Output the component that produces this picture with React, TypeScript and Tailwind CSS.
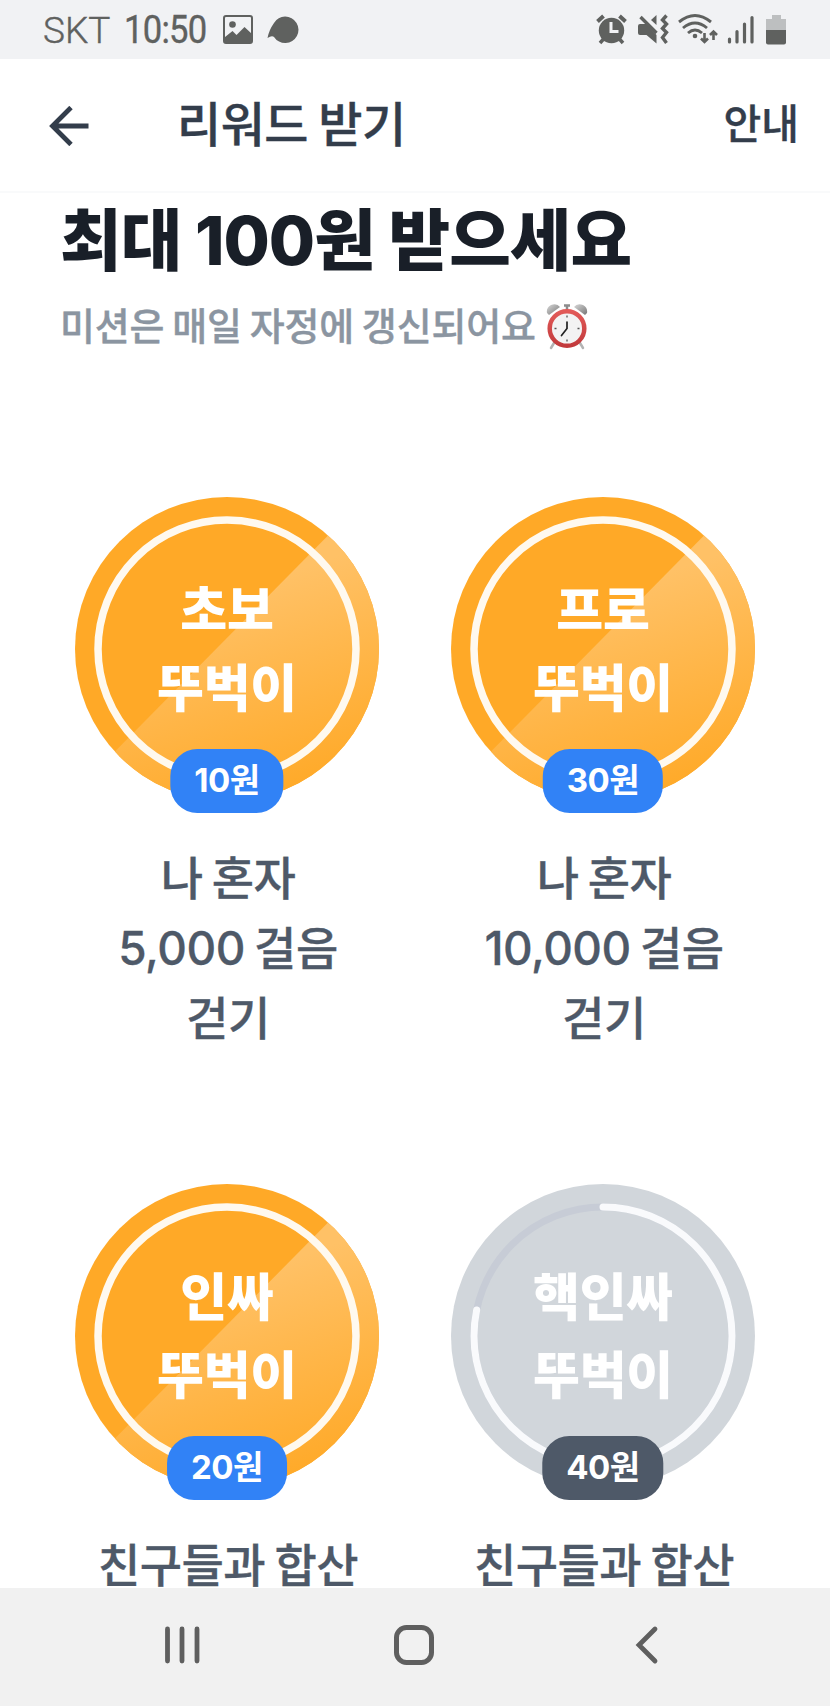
import React from "react";

interface Mission {
  title: string[];
  reward: string;
  description: string[];
  done: boolean;
}

const missions: Mission[] = [
  { title: ["초보", "뚜벅이"], reward: "10원", description: ["나 혼자", "5,000 걸음", "걷기"], done: true },
  { title: ["프로", "뚜벅이"], reward: "30원", description: ["나 혼자", "10,000 걸음", "걷기"], done: true },
  { title: ["인싸", "뚜벅이"], reward: "20원", description: ["친구들과 합산"], done: true },
  { title: ["핵인싸", "뚜벅이"], reward: "40원", description: ["친구들과 합산"], done: false },
];

const RING_RADIUS = 129;
const RING_LENGTH = 2 * Math.PI * RING_RADIUS;

const StatusIcons = () => (
  <svg className="block h-[59px] w-[210px]" viewBox="590 0 210 59" fill="none" stroke="#5f615f" strokeWidth="2.6">
    {/* alarm */}
    <circle cx="611.5" cy="30.5" r="12.7" fill="#5f615f" stroke="none" />
    <path d="M597.5 21.5l6-5.5M625.5 21.5l-6-5.5" strokeWidth="4" />
    <path d="M600 43l4-4.5M623 43l-4-4.5" strokeWidth="3.5" />
    <path d="M611 22v9.5h7.5" stroke="#f1f2f4" strokeWidth="3" />
    {/* muted, vibrating */}
    <path d="M638 26q0-2 2-2h6l10.5 11v8.5L646.5 35H640q-2 0-2-2z" fill="#5f615f" stroke="none" />
    <path d="M656.5 15v10l-5.5-5z" fill="#5f615f" stroke="none" />
    <path d="M640.5 17l16 16" strokeWidth="3.4" />
    <path d="M666.5 15.5l-4 4.5 4 4-4 4.5 4 4-4 5 4 5.5" strokeWidth="3.4" />
    {/* wifi */}
    <path d="M679 22q16-13 32 0M683 28q12-10 24 0M688 33q7-6 14 0" strokeWidth="2.9" />
    <circle cx="695" cy="36" r="2.3" fill="#5f615f" stroke="none" />
    <path d="M704.5 33v8M701 38.5l3.5 3.5 3.5-3.5M713.5 40v-8M710 35l3.5-3.5 3.5 3.5" strokeWidth="2.6" />
    {/* signal */}
    <path d="M729.5 39v3M737 31.5V42M744.5 24v18M752 17.5V42" strokeWidth="3.2" strokeLinecap="round" />
    {/* battery */}
    <path d="M772 15h9v4h5v11h-20V19h6z" fill="#bdbfc0" stroke="none" />
    <path d="M766 30h20v12.5q0 2-2 2h-16q-2 0-2-2z" fill="#5f615f" stroke="none" />
  </svg>
);

const AlarmClock = () => (
  <svg className="mt-[2px] ml-[10px] block h-[46px] w-[42px]" viewBox="0 0 42 46">
    <defs>
      <linearGradient id="bell" x1="0" y1="0" x2="1" y2="1">
        <stop offset="0" stopColor="#d8d8d8" />
        <stop offset="1" stopColor="#757575" />
      </linearGradient>
      <linearGradient id="rim" x1="0" y1="0" x2="0" y2="1">
        <stop offset="0" stopColor="#e25a58" />
        <stop offset="1" stopColor="#c23a3c" />
      </linearGradient>
    </defs>
    <path d="M8 39l-3 5M34 39l3 5" stroke="#b3b3b3" strokeWidth="2.5" strokeLinecap="round" />
    <path d="M1 9Q0 4 5 1q6-2 9 2L3 11z" fill="url(#bell)" />
    <path d="M41 9q1-5-4-8-6-2-9 2l11 8z" fill="url(#bell)" />
    <path d="M18 1.5h6M21 1v6" stroke="#8c8c8c" strokeWidth="2.5" />
    <circle cx="21" cy="24.5" r="17.3" fill="#f3f3f3" stroke="url(#rim)" strokeWidth="4.5" />
    <path d="M21 11.5v2M21 35.5v2M8.5 24.5h2M31.5 24.5h2" stroke="#555" strokeWidth="1.3" />
    <path d="M21 18v6.5l-5.5 7" fill="none" stroke="#222" strokeWidth="1.7" strokeLinecap="round" />
  </svg>
);

const Medal = ({ mission }: { mission: Mission }) => (
  <div className="relative h-[316px] w-[304px]">
    <svg className="absolute left-0 top-0 h-[304px] w-[304px]" viewBox="0 0 304 304" fill="none">
      <defs>
        <linearGradient id="shine" gradientUnits="userSpaceOnUse" x1="145" y1="100" x2="215" y2="300">
          <stop offset="0" stopColor="#ffc166" />
          <stop offset="1" stopColor="#ffa927" />
        </linearGradient>
        <clipPath id="disc">
          <circle cx="152" cy="152" r="152" />
        </clipPath>
      </defs>
      <circle cx="152" cy="152" r="152" fill={mission.done ? "#ffa927" : "#d1d6db"} />
      {mission.done ? (
        <>
          <path d="M292 -1L0 295V304H304V-1z" fill="url(#shine)" clipPath="url(#disc)" />
          <circle cx="152" cy="152" r={RING_RADIUS} stroke="#fff9ef" strokeWidth="7.5" />
        </>
      ) : (
        <>
          <circle cx="152" cy="152" r={RING_RADIUS} stroke="#c7ccd6" strokeWidth="7" />
          <circle
            cx="152"
            cy="152"
            r={RING_RADIUS}
            stroke="#f9fafc"
            strokeWidth="7"
            strokeLinecap="round"
            strokeDasharray={`${RING_LENGTH * 0.782} ${RING_LENGTH}`}
            transform="rotate(-90 152 152)"
          />
        </>
      )}
    </svg>
    <div className="relative pt-[75px] text-center text-[51px] leading-[78px] font-black tracking-[-0.2px] text-white">
      {mission.title.map((line) => (
        <div key={line}>{line}</div>
      ))}
    </div>
    <div
      className={`absolute bottom-0 left-1/2 flex h-16 -translate-x-1/2 items-center rounded-[27px] px-6 text-[33px] font-bold tracking-[-0.5px] text-white ${
        mission.done ? "bg-[#3182f6]" : "bg-[#4e5968]"
      }`}
    >
      {mission.reward}
    </div>
  </div>
);

const MissionCard = ({ mission }: { mission: Mission }) => (
  <div className="flex h-[687px] flex-col items-center">
    <Medal mission={mission} />
    <div className="mt-[30px] pl-[2px] text-center text-[46px] leading-[70px] font-medium tracking-[-0.5px] text-[#4e5968] [-webkit-text-stroke:0.3px] [word-spacing:-2.5px]">
      {mission.description.map((line) => (
        <div key={line}>{line}</div>
      ))}
    </div>
  </div>
);

const App: React.FC = () => {
  return (
    <div className="flex h-[1706px] w-[830px] flex-col overflow-hidden bg-white font-[Inter,'Noto_Sans_CJK_KR',sans-serif] whitespace-nowrap">
      <div className="flex h-[59px] shrink-0 items-center justify-between bg-[#f1f2f4] pr-[30px] pl-[43px] font-[Roboto,sans-serif] text-[#5f615f]">
        <div className="flex items-center">
          <span className="w-[81px] pt-[3px] text-[37px] font-light [-webkit-text-stroke:0.4px]">SKT</span>
          <span className="w-[99px] origin-left scale-x-[0.91] pt-px text-[38px] tracking-[-0.8px] [-webkit-text-stroke:0.4px]">
            10:50
          </span>
          <svg className="h-[29px] w-[30px]" viewBox="0 0 30 29">
            <rect x="1" y="1" width="28" height="27" rx="2" fill="none" stroke="#5f615f" strokeWidth="2" />
            <circle cx="9.5" cy="9.5" r="3.3" fill="#5f615f" />
            <path d="M2 22l7.5-6 4 4 8-8 7.5 7v8H2z" fill="#5f615f" />
          </svg>
          <svg className="ml-[14px] h-[28px] w-[32px]" viewBox="0 0 32 28">
            <path d="M18 .5a13.3 13.3 0 1 1-11 20.5q-2-2-6.5 1Q2 14 7 7q4-6.500 11-6.500z" fill="#5f615f" />
          </svg>
        </div>
        <StatusIcons />
      </div>

      <header className="flex h-[134px] shrink-0 items-center border-b-2 border-[#f9fafb] pr-[31px] pl-[49px] text-[#333d4b] [-webkit-text-stroke:0.4px]">
        <svg className="mt-px h-[40px] w-[40px]" viewBox="0 0 40 40" fill="none" stroke="#333d4b" strokeWidth="4.8">
          <path d="M39.5 20H3M22 1.5L3.5 20 22 38.5" />
        </svg>
        <h1 className="ml-[88px] text-[48px] font-medium tracking-[-0.5px] [word-spacing:-2px]">리워드 받기</h1>
        <span className="ml-auto text-[41px] font-medium">안내</span>
      </header>

      <main className="min-h-0 flex-1 overflow-hidden">
        <h2 className="pt-[8px] pl-[60px] text-[67px] leading-[80px] font-extrabold tracking-[-1px] text-[#191f28]">
          최대 100원 받으세요
        </h2>
        <div className="mt-[20px] flex h-[50px] items-center pl-[60px] text-[38px] font-medium tracking-[-0.2px] text-[#8b95a1] [-webkit-text-stroke:0.4px] [word-spacing:-2px]">
          미션은 매일 자정에 갱신되어요
          <AlarmClock />
        </div>
        <div className="mt-[146px] grid grid-cols-[304px_304px] gap-x-[72px] pl-[75px]">
          {missions.map((mission) => (
            <MissionCard key={mission.title[0]} mission={mission} />
          ))}
        </div>
      </main>

      <nav className="flex h-[118px] shrink-0 items-center bg-[#f1f1f1] pr-[171px] pb-1 pl-[164px]">
        <svg className="h-[40px] w-[38px]" viewBox="0 0 38 40" stroke="#5f5f5f" strokeWidth="4.8" strokeLinecap="round">
          <path d="M3.5 4v32M18 4v32M33 4v32" />
        </svg>
        <svg className="ml-[192px] h-[40px] w-[40px]" viewBox="0 0 40 40" fill="none" stroke="#5f5f5f" strokeWidth="5">
          <rect x="2.5" y="2.5" width="35" height="35" rx="10" />
        </svg>
        <svg className="ml-auto h-[40px] w-[24px]" viewBox="0 0 24 40" fill="none" stroke="#5f5f5f" strokeWidth="4.8" strokeLinecap="round">
          <path d="M20 4L4 20l16 16" />
        </svg>
      </nav>
    </div>
  );
};

export default App;
